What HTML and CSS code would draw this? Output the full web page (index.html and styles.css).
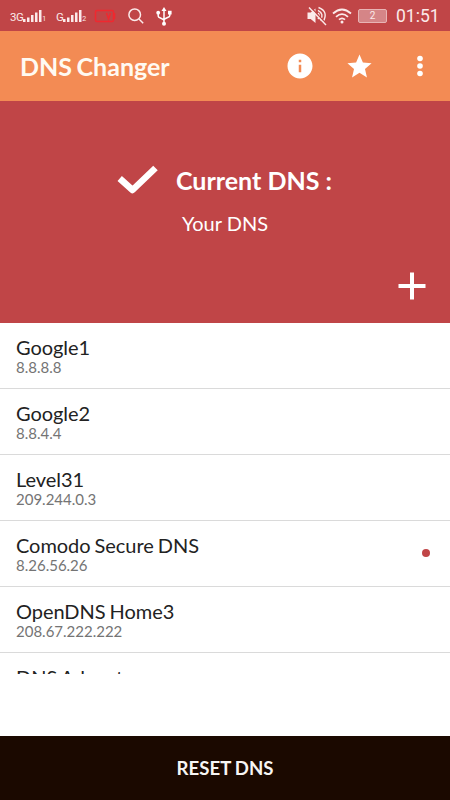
FILE: index.html
```html
<!DOCTYPE html>
<html lang="en">
<head>
    <meta charset="UTF-8">
    <meta name="viewport" content="width=device-width, initial-scale=1.0">
    <title>DNS Changer</title>
    <link rel="stylesheet" href="styles.css">
</head>
<body>
    <div class="status-bar">
        <div class="signal">
            <span class="network">3G</span>
            <svg width="20" height="14" viewBox="0 0 20 14" fill="#fbeaea">
                <path d="M0 10h2.500v3H0zM4 8.500h2.500V13H4zM8 6h2.500v7H8zM12 3.500h2.500V13H12zM16 1h2.500v12H16z"/>
            </svg>
            <span class="sim">1</span>
        </div>
        <div class="signal signal-two">
            <span class="network">G</span>
            <svg width="20" height="14" viewBox="0 0 20 14" fill="#fbeaea">
                <path d="M0 10h2.500v3H0zM4 8.500h2.500V13H4zM8 6h2.500v7H8zM12 3.500h2.500V13H12zM16 1h2.500v12H16z"/>
            </svg>
            <span class="sim">2</span>
        </div>
        <svg class="battery-alert" width="22" height="14" viewBox="0 0 22 14" fill="none" stroke="#f0282f" stroke-width="1.500">
            <rect x="1.500" y="1.500" width="18" height="11" rx="1.500"/>
            <path d="M20.500 4v6M12.500 4l2 6 2-6"/>
        </svg>
        <svg class="search" width="18" height="18" viewBox="0 0 18 18" fill="none" stroke="#fbeaea" stroke-width="1.500">
            <circle cx="7.700" cy="7.700" r="5.800"/>
            <path d="M12 12l4.200 4.200"/>
        </svg>
        <svg class="usb" width="16" height="19" viewBox="0 0 16 19" fill="none" stroke="#fff" stroke-width="1.500">
            <path d="M8 3v14M2.200 6v3.200c0 2 5.800 2 5.800 4.300M13.800 6v2.700c0 2-5.800 2-5.800 4.300"/>
            <path d="M8 0l2.500 4h-5zM12 3.800h3.600v3.600H12z" fill="#fff" stroke="none"/>
            <circle cx="2.200" cy="5.700" r="1.900" fill="#fff" stroke="none"/>
            <circle cx="8" cy="16.800" r="2" fill="#fff" stroke="none"/>
        </svg>
        <svg class="muted" width="20" height="20" viewBox="0 0 20 20" fill="none" stroke="#fbeaea" stroke-width="1.400">
            <path d="M.500 6.500h3.200L8.500 2.500v14.500l-4.800-4H.500z" fill="#fbeaea" stroke="none"/>
            <path d="M11 7q2.500 2.500 0 6M11.500 1.500q10.500 4 4.500 14.500M11 4.300q6.500 3.500 2.500 10"/>
            <path d="M3.500 1l16 17" stroke="#c04547" stroke-width="1.500"/>
            <path d="M2 1.500l17 17.500"/>
        </svg>
        <svg class="wifi" width="20" height="16" viewBox="0 0 20 16" fill="none" stroke="#fbeaea" stroke-width="1.800">
            <path d="M1 5.500q9-8 18 0M4 8.800q6-5.400 12 0M7 11.700q3-2.700 6 0"/>
            <circle cx="10" cy="14" r="1.500" fill="#fbeaea" stroke="none"/>
        </svg>
        <div class="battery">2</div>
        <div class="clock">01:51</div>
    </div>

    <header class="app-bar">
        <h1>DNS Changer</h1>
        <svg class="info" width="30" height="30" viewBox="0 0 24 24" fill="#fff">
            <path d="M12 2C6.480 2 2 6.480 2 12s4.480 10 10 10 10-4.480 10-10S17.520 2 12 2zm1 15h-2v-6h2v6zm0-8h-2V7h2v2z"/>
        </svg>
        <svg class="star" width="29" height="29" viewBox="0 0 24 24" fill="#fff">
            <path d="M12 17.270L18.180 21l-1.640-7.030L22 9.240l-7.190-.61L12 2 9.190 8.630 2 9.240l5.460 4.730L5.820 21z"/>
        </svg>
        <svg class="more" width="6" height="22" viewBox="0 0 6 22" fill="#fff">
            <circle cx="3" cy="3.500" r="2.800"/>
            <circle cx="3" cy="11" r="2.800"/>
            <circle cx="3" cy="18.500" r="2.800"/>
        </svg>
    </header>

    <section class="current">
        <div class="current-title">
            <svg width="42" height="32" viewBox="0 0 42 32" fill="none" stroke="#fff" stroke-width="6.500" stroke-linejoin="round">
                <path d="M2.700 14.500L15.500 26 38.500 4"/>
            </svg>
            <h2>Current DNS :</h2>
        </div>
        <p>Your DNS</p>
        <svg class="add" width="28" height="28" viewBox="0 0 28 28" stroke="#fff" stroke-width="4">
            <path d="M14 .500v27M.500 14h27"/>
        </svg>
    </section>

    <main>
        <ul class="dns-list">
            <li>
                <h3>Google1</h3>
                <p>8.8.8.8</p>
            </li>
            <li>
                <h3>Google2</h3>
                <p>8.8.4.4</p>
            </li>
            <li>
                <h3>Level31</h3>
                <p>209.244.0.3</p>
            </li>
            <li class="selected">
                <h3>Comodo Secure DNS</h3>
                <p>8.26.56.26</p>
            </li>
            <li>
                <h3>OpenDNS Home3</h3>
                <p>208.67.222.222</p>
            </li>
            <li>
                <h3>DNS Advantage</h3>
            </li>
        </ul>
    </main>

    <button type="button" class="reset">RESET DNS</button>
</body>
</html>
```

FILE: styles.css
```css
* {
    box-sizing: border-box;
}
body {
    display: flex;
    flex-direction: column;
    height: 800px;
    margin: 0;
    overflow: hidden;
    font-family: Lato, sans-serif;
    background: #fff;
}
h1, h2, h3, p, ul {
    margin: 0;
    padding: 0;
}
svg {
    display: block;
    flex: none;
}
.status-bar {
    display: flex;
    align-items: center;
    height: 31px;
    padding: 1px 11px 0 10px;
    background: #c04547;
    color: #fbeaea;
    font-family: Roboto, sans-serif;
}
.signal {
    display: flex;
    align-items: flex-end;
    width: 38px;
    height: 14px;
}
.signal-two {
    width: 32px;
    margin-left: 8px;
}
.network {
    font-size: 11.500px;
    letter-spacing: -0.500px;
    line-height: 11px;
}
.sim {
    margin-left: -1px;
    font-size: 7px;
    line-height: 7px;
}
.battery-alert {
    margin-left: 6px;
}
.search {
    margin-left: 11px;
}
.usb {
    margin-left: 11px;
}
.muted {
    margin-left: auto;
}
.wifi {
    margin-left: 5px;
}
.battery {
    width: 29px;
    height: 14px;
    margin-left: 6px;
    border: 1px solid #e8b4b5;
    border-radius: 2px;
    background: #d58587;
    font-size: 10px;
    line-height: 12px;
    text-align: center;
}
.clock {
    width: 43px;
    margin-left: 9px;
    font-size: 17.500px;
    line-height: 20px;
}
.app-bar {
    display: flex;
    align-items: center;
    height: 70px;
    padding: 0 27px 0 20px;
    background: #f38b54;
    color: #fffaf2;
}
.app-bar h1 {
    font-size: 25px;
    font-weight: bold;
    line-height: 30px;
    word-spacing: -1.500px;
}
.info {
    margin-left: auto;
}
.star {
    margin: 0 43px 0 30px;
}
.current {
    display: flex;
    flex-direction: column;
    height: 222px;
    padding-top: 61px;
    background: #c04547;
    color: #fff;
}
.current-title {
    display: flex;
    align-items: center;
    gap: 17px;
    height: 36px;
    padding-left: 117px;
}
.current-title h2 {
    font-size: 25px;
    line-height: 36px;
}
.current > p {
    margin-top: 11px;
    font-size: 20px;
    line-height: 28px;
    text-align: center;
}
.add {
    align-self: flex-end;
    margin: 35px 24px 0 0;
}
main {
    height: 351px;
    overflow: hidden;
}
.dns-list {
    list-style-type: none;
}
.dns-list li {
    position: relative;
    height: 66px;
    padding: 12px 16px 0;
    border-bottom: 1px solid #dadada;
}
.dns-list h3 {
    color: #222;
    font-size: 20px;
    font-weight: normal;
    letter-spacing: -0.050px;
    line-height: 24px;
    word-spacing: -1px;
}
.dns-list p {
    color: #747474;
    font-size: 15px;
    line-height: 16px;
}
.selected::after {
    content: "";
    position: absolute;
    top: 28px;
    right: 20px;
    width: 8px;
    height: 8px;
    border-radius: 50%;
    background: #c04547;
}
.reset {
    height: 64px;
    margin-top: auto;
    padding: 0;
    border: none;
    background: #1b0900;
    color: #f7f5f3;
    font-family: inherit;
    font-size: 18.600px;
    font-weight: bold;
    word-spacing: -0.500px;
}
```
